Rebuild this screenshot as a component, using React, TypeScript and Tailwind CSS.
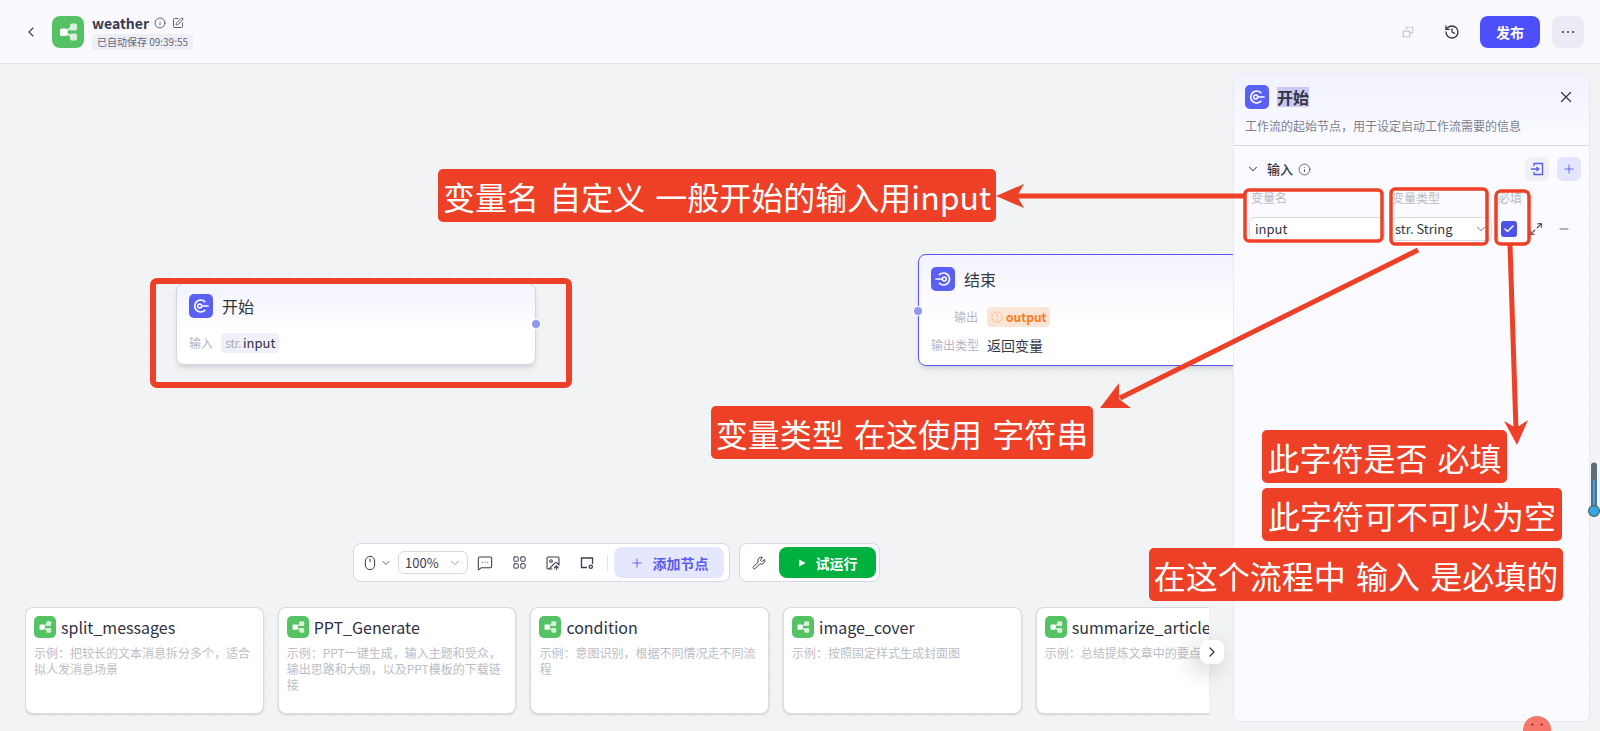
import {
  ChevronDown,
  ChevronLeft,
  ChevronRight,
  Check,
  History,
  ImageUp,
  Info,
  LayoutGrid,
  Maximize2,
  MessageSquareMore,
  Minus,
  Mouse,
  Plus,
  SquarePen,
  Wrench,
  X,
} from "lucide-react";

const templates = [
  { name: "split_messages", desc: "示例：把较长的文本消息拆分多个，适合拟人发消息场景" },
  { name: "PPT_Generate", desc: "示例：PPT一键生成，输入主题和受众，输出思路和大纲，以及PPT模板的下载链接" },
  { name: "condition", desc: "示例：意图识别，根据不同情况走不同流程" },
  { name: "image_cover", desc: "示例：按照固定样式生成封面图" },
  { name: "summarize_article", desc: "示例：总结提炼文章中的要点" },
];

function FlowLogo({ className }: { className: string }) {
  return (
    <div className={`flex items-center justify-center bg-[#55c364] ${className}`}>
      <svg viewBox="0 0 32 32" className="h-full w-full">
        <path d="M13 16 L20 11 M13 16 L20 21" stroke="#fff" strokeWidth="1.6" opacity="0.8" />
        <rect x="8" y="12.5" width="7.5" height="7.5" rx="1.5" fill="#fff" />
        <rect x="18" y="7.5" width="7" height="7" rx="1.5" fill="#fff" opacity="0.75" />
        <rect x="18" y="17.5" width="7" height="7" rx="1.5" fill="#fff" opacity="0.75" />
      </svg>
    </div>
  );
}

function StartIcon() {
  return (
    <div className="h-6 w-6 shrink-0 rounded-[5px] bg-[#5a60f5]">
      <svg viewBox="0 0 24 24" className="h-full w-full" fill="none" stroke="#fff">
        <path d="M15.8 7.6 A6 6 0 1 0 15.8 16.4" strokeWidth="1.7" strokeLinecap="round" />
        <circle cx="10.7" cy="12" r="2" strokeWidth="1.5" />
        <path d="M12.6 12 H19" strokeWidth="1.7" strokeLinecap="round" />
      </svg>
    </div>
  );
}

function EndIcon() {
  return (
    <div className="h-6 w-6 shrink-0 rounded-[5px] bg-[#5a60f5]">
      <svg viewBox="0 0 24 24" className="h-full w-full" fill="none" stroke="#fff">
        <path d="M8.5 7.6 A6 6 0 1 1 8.5 16.4" strokeWidth="1.7" strokeLinecap="round" />
        <circle cx="13.3" cy="12" r="2" strokeWidth="1.5" />
        <path d="M5 12 H11.4" strokeWidth="1.7" strokeLinecap="round" />
      </svg>
    </div>
  );
}

function Header() {
  return (
    <header className="flex h-16 shrink-0 items-center border-b border-[#e2e2ec] bg-[#f9f9fe] pr-4">
      <ChevronLeft className="ml-[23px] h-4 w-4 text-[#3a3c50]" strokeWidth={1.6} />
      <FlowLogo className="ml-[13px] h-8 w-8 rounded-lg" />
      <div className="ml-2 flex flex-col">
        <div className="flex h-[19px] items-center">
          <span className="text-sm font-semibold leading-[19px] text-[#383a4f]">weather</span>
          <Info className="ml-[5px] h-3 w-3 text-[#4a4c60]" strokeWidth={1.7} />
          <SquarePen className="ml-[6px] h-3 w-3 text-[#4a4c60]" strokeWidth={1.8} />
        </div>
        <div className="mt-[1px] flex h-4 w-[101px] items-center justify-center rounded-[4px] bg-[#eeeef6] text-[10px] text-[#656779]">
          已自动保存 09:39:55
        </div>
      </div>
      <div className="ml-auto flex items-center">
        <svg viewBox="0 0 14 14" className="h-3 w-3" fill="none" stroke="#c6c7d2" strokeWidth="1.3">
          <path d="M5 4.5 V1.5 H12.5 V8 H9" />
          <path d="M1.5 6 H9 V12.5 H1.5 Z" />
        </svg>
        <History className="ml-[30px] h-4 w-4 text-[#33354a]" strokeWidth={1.9} />
        <button className="ml-5 h-8 w-[60px] rounded-lg bg-[#4c4ffa] text-sm font-bold text-white">发布</button>
        <button className="ml-3 flex h-8 w-8 items-center justify-center rounded-lg bg-[#ebebf5] text-[#3a3c50]">
          <svg viewBox="0 0 14 4" className="h-1 w-[14px]" fill="currentColor">
            <circle cx="2" cy="2" r="1" />
            <circle cx="7" cy="2" r="1" />
            <circle cx="12" cy="2" r="1" />
          </svg>
        </button>
      </div>
    </header>
  );
}

function StartNode() {
  return (
    <div className="absolute left-[176px] top-[219px] h-[82px] w-[360px] rounded-lg border border-[#d3d6e4] bg-gradient-to-b from-[#f3f3ff] to-white to-60% px-3 pt-[10px] shadow-md">
      <div className="flex items-center gap-[9px]">
        <StartIcon />
        <span className="text-base font-normal text-[#33353f]">开始</span>
      </div>
      <div className="mt-[15px] flex items-center gap-2 text-xs">
        <span className="text-[#b5b7c4]">输入</span>
        <span className="flex h-5 items-center rounded-[4px] bg-[#f0f0f8] px-[4px] text-[13px]">
          <span className="tracking-tighter text-[#b0b2c0]">str.</span>
          <span className="ml-[2px] text-[#2f3142]">input</span>
        </span>
      </div>
      <div className="absolute right-[-5px] top-[36px] h-2 w-2 rounded-full bg-[#9297f0] ring-1 ring-white" />
    </div>
  );
}

function EndNode() {
  return (
    <div className="absolute left-[918px] top-[190px] h-[112px] w-[330px] rounded-lg border border-[#5a55f5] bg-gradient-to-b from-[#f3f3ff] to-white to-60% px-3 pt-3 shadow-md">
      <div className="flex items-center gap-[9px]">
        <EndIcon />
        <span className="text-base font-normal text-[#33353f]">结束</span>
      </div>
      <div className="mt-4 flex items-center gap-[9px] text-xs">
        <span className="w-[47px] text-right text-[#b5b7c4]">输出</span>
        <span className="flex h-5 w-[63px] items-center gap-[3px] rounded-[4px] bg-[#fbe5d6] pl-[4px] font-semibold text-[#ff7a1a]">
          <svg viewBox="0 0 14 14" className="h-3 w-3 shrink-0" fill="none" stroke="#f8b98c" strokeWidth="1">
            <circle cx="7" cy="7" r="6" />
            <path d="M7 3.8 V7.8 M7 9.4 V10.4" />
          </svg>
          output
        </span>
      </div>
      <div className="mt-[8px] flex items-center gap-[9px] text-xs">
        <span className="w-[47px] whitespace-nowrap text-right text-[#b5b7c4]">输出类型</span>
        <span className="text-sm text-[#33353f]">返回变量</span>
      </div>
      <div className="absolute left-[-5px] top-[52px] h-2 w-2 rounded-full bg-[#9297f0] ring-1 ring-white" />
    </div>
  );
}

function Toolbar() {
  return (
    <div className="flex items-center pl-[353px]">
      <div className="flex h-[39px] w-[377px] items-center rounded-lg border border-[#d6d8e4] bg-white pl-2 text-[#3a3c50]">
        <Mouse className="h-4 w-4" strokeWidth={1.5} />
        <ChevronDown className="ml-[2px] h-3 w-3 text-[#5d5f70]" />
        <div className="ml-[6px] flex h-[23px] w-[70px] shrink-0 items-center justify-between rounded-md border border-[#d6d8e4] pl-[6px] pr-[5px] text-[13px]">
          <span>100%</span>
          <ChevronDown className="h-[14px] w-[14px] text-[#8a8c9a]" strokeWidth={1.5} />
        </div>
        <div className="flex w-[34px] justify-center">
          <MessageSquareMore className="h-4 w-4" strokeWidth={1.6} />
        </div>
        <div className="flex w-[34px] justify-center">
          <LayoutGrid className="h-[15px] w-[15px]" strokeWidth={1.6} />
        </div>
        <div className="flex w-[34px] justify-center">
          <ImageUp className="h-4 w-4" strokeWidth={1.6} />
        </div>
        <div className="flex w-[34px] justify-center">
          <svg viewBox="0 0 14 14" className="h-[14px] w-[14px]" fill="none" stroke="currentColor" strokeWidth="1.3">
            <path d="M7 11.5 H1.5 V2 H12.5 V8" />
            <circle cx="10.8" cy="10.8" r="1.6" />
          </svg>
        </div>
        <div className="ml-[3px] h-4 w-px bg-[#e4e5ec]" />
        <button className="ml-[6px] flex h-[31px] w-[110px] shrink-0 items-center justify-center gap-[9px] rounded-lg bg-[#e5e6ff] text-sm font-semibold text-[#5a5cf0]">
          <Plus className="h-[14px] w-[14px]" strokeWidth={1.6} />
          添加节点
        </button>
      </div>
      <div className="ml-[9px] flex h-[39px] w-[141px] items-center rounded-lg border border-[#d6d8e4] bg-white">
        <Wrench className="ml-[12px] h-[14px] w-[14px] text-[#3a3c50]" strokeWidth={1.7} />
        <button className="ml-[13px] flex h-[31px] w-[97px] items-center justify-center gap-[10px] rounded-lg bg-[#00b140] text-sm font-bold text-white">
          <svg viewBox="0 0 10 10" className="h-2 w-2" fill="currentColor">
            <path d="M1.5 0.5 L9.5 5 L1.5 9.5 Z" />
          </svg>
          试运行
        </button>
      </div>
    </div>
  );
}

function TemplateStrip() {
  return (
    <div className="relative ml-[25px] mt-[25px] w-[1184px]">
      <div className="flex gap-[14.2px] overflow-hidden pb-[2px]">
        {templates.map((t) => (
          <div key={t.name} className="h-[107px] w-[238.5px] shrink-0 rounded-lg border border-[#d9dae0] bg-white px-2 pt-2 shadow-sm">
            <div className="flex h-[22px] items-center gap-[5px]">
              <FlowLogo className="h-[22px] w-[22px] shrink-0 rounded-[5px]" />
              <span className="whitespace-nowrap text-base text-[#2f3142]">{t.name}</span>
            </div>
            <p className="mt-[7px] text-xs leading-4 text-[#bcbdc4]">{t.desc}</p>
          </div>
        ))}
      </div>
      <button className="absolute right-[-15px] top-[33px] flex h-6 w-6 items-center justify-center rounded-lg bg-white text-[#2f3142] shadow-[-6px_6px_24px_rgba(0,0,0,0.22)]">
        <ChevronRight className="h-4 w-4" strokeWidth={1.8} />
      </button>
    </div>
  );
}

function SidePanel() {
  return (
    <aside className="h-[649px] w-[357px] overflow-hidden rounded-lg border border-[#e8e8f1] bg-[#fbfbff]">
      <div className="h-[72px] border-b border-[#d6d6e4] bg-gradient-to-b from-[#f2f2ff] to-[#fbfbff] px-[11px] pt-[11px]">
        <div className="flex h-6 items-center">
          <StartIcon />
          <span className="ml-2 bg-[#c9c9f2] text-base font-semibold leading-5 text-[#33353f]">开始</span>
          <X className="ml-auto mr-[3px] h-[18px] w-[18px] text-[#33353f]" strokeWidth={1.6} />
        </div>
        <p className="mt-[9px] text-xs leading-4 text-[#7d7f8e]">工作流的起始节点，用于设定启动工作流需要的信息</p>
      </div>
      <div className="mt-[11px] flex h-6 items-center pl-[12px] pr-2">
        <ChevronDown className="h-[14px] w-[14px] text-[#4a4c60]" strokeWidth={1.8} />
        <span className="ml-[7px] text-[13px] font-medium text-[#33353f]">输入</span>
        <Info className="ml-[5px] h-[13px] w-[13px] text-[#4a4c60]" strokeWidth={1.5} />
        <button className="ml-auto flex h-6 w-6 items-center justify-center rounded-md bg-[#f0f0fa] text-[#5a5cf0]">
          <svg viewBox="0 0 14 14" className="h-[14px] w-[14px]" fill="none" stroke="currentColor" strokeWidth="1.3">
            <path d="M4 4 V1.5 H12.5 V12.5 H4 V10" />
            <path d="M1 7 H8.5 M6.5 5 L8.7 7 L6.5 9" />
          </svg>
        </button>
        <button className="ml-2 flex h-6 w-6 items-center justify-center rounded-md bg-[#e4e6ff] text-[#5a5cf0]">
          <Plus className="h-[14px] w-[14px]" strokeWidth={1.6} />
        </button>
      </div>
      <div className="mt-[9px] flex pl-[17px] text-xs leading-4 text-[#b8b9c2]">
        <span className="w-[141px]">变量名</span>
        <span className="w-[106px]">变量类型</span>
        <span>必填</span>
      </div>
      <div className="mt-[11px] flex items-center pl-[15px]">
        <div className="flex h-[24px] w-[136px] items-center rounded-md border border-[#d8d9e4] bg-white pl-[5px] text-[13px] text-[#33353f]">input</div>
        <div className="ml-[6px] flex h-[24px] w-[101px] items-center justify-between rounded-md border border-[#d8d9e4] bg-white pl-[3px] pr-[3px] text-[13px] text-[#33353f]">
          <span>str. String</span>
          <ChevronDown className="h-[14px] w-[14px] text-[#5d5f70]" strokeWidth={1.5} />
        </div>
        <div className="ml-[9px] flex h-4 w-4 items-center justify-center rounded-[3px] bg-[#4d53e8]">
          <Check className="h-3 w-3 text-white" strokeWidth={3} />
        </div>
        <Maximize2 className="ml-[12px] h-[14px] w-[14px] text-[#33353f]" strokeWidth={1.8} />
        <Minus className="ml-[14px] h-[14px] w-[14px] text-[#5d5f70]" strokeWidth={1.6} />
      </div>
    </aside>
  );
}

function Annotations() {
  const red = "#ee4026";
  return (
    <svg viewBox="0 0 1600 731" className="pointer-events-none absolute left-0 top-0 h-[731px] w-[1600px]" fill="none">
      <rect x="153" y="281" width="416" height="104" rx="4" stroke={red} strokeWidth="6" />
      <g stroke={red} strokeWidth="3.5">
        <rect x="1245" y="190" width="137" height="51" rx="4" />
        <rect x="1391" y="189" width="96" height="55" rx="4" />
        <rect x="1496" y="191" width="33" height="53" rx="5" />
      </g>
      <g stroke={red} strokeWidth="5">
        <path d="M1245 196 H1015" />
        <path d="M1418 250 L1120 398" />
        <path d="M1510 245 L1516 430" />
      </g>
      <g fill={red}>
        <polygon points="996,196 1024,184 1017,196 1024,208" />
        <polygon points="1100,408 1131,408 1119,399 1119,383" />
        <polygon points="1517,445 1528,420 1516,428 1504,421" />
      </g>
    </svg>
  );
}

function Callout({ text, className }: { text: string; className: string }) {
  return (
    <div className={`absolute flex h-[53px] items-center justify-center whitespace-nowrap rounded-[5px] bg-[#ee4026] text-[32px] font-normal text-white [word-spacing:3px] ${className}`}>
      {text}
    </div>
  );
}

export default function App() {
  return (
    <div className="relative flex h-screen w-full flex-col overflow-hidden bg-[#f2f3f5] font-['Noto_Sans_CJK_SC','Noto_Sans',sans-serif]">
      <Header />
      <main className="relative isolate flex flex-1 justify-end bg-[radial-gradient(#eaebef_1px,transparent_1px)] bg-[size:20px_20px] pr-[10px] pt-[9px]">
        <StartNode />
        <EndNode />
        <div className="relative z-10">
          <SidePanel />
        </div>
        <div className="absolute bottom-[15px] left-0 z-10">
          <Toolbar />
          <TemplateStrip />
        </div>
      </main>

      <Annotations />
      <Callout text="变量名 自定义 一般开始的输入用input" className="left-[438px] top-[169px] w-[558px]" />
      <Callout text="变量类型 在这使用 字符串" className="left-[711px] top-[406px] w-[382px]" />
      <Callout text="此字符是否 必填" className="left-[1262px] top-[430px] w-[245px]" />
      <Callout text="此字符可不可以为空" className="left-[1262px] top-[488px] w-[300px]" />
      <Callout text="在这个流程中 输入 是必填的" className="left-[1149px] top-[548px] w-[414px]" />

      {/* little widgets stuck on the right edge */}
      <svg viewBox="0 0 12 56" className="absolute left-[1588px] top-[462px] h-14 w-3">
        <rect x="3" y="0.5" width="6" height="46" rx="3" fill="#5d6b7a" />
        <rect x="4.8" y="18" width="2.4" height="28" fill="#35a9df" />
        <circle cx="6" cy="49" r="5.4" fill="#35a9df" stroke="#4f5d6b" strokeWidth="1.2" />
      </svg>
      <svg viewBox="0 0 30 16" className="absolute left-[1522px] top-[716px] h-[15px] w-[30px]">
        <circle cx="15" cy="15" r="15" fill="#f4776a" />
        <circle cx="10" cy="9" r="1" fill="#5a2a26" />
        <circle cx="20" cy="9" r="1" fill="#5a2a26" />
      </svg>
    </div>
  );
}
